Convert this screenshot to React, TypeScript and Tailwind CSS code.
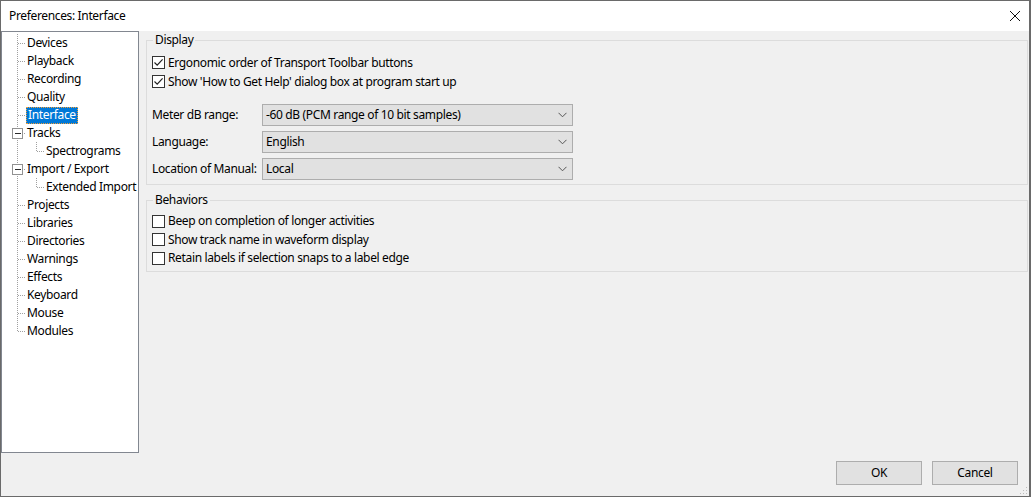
import React from "react";

type Node = { label: string; depth: 0 | 1; toggle?: boolean; selected?: boolean };

const tree: Node[] = [
  { label: "Devices", depth: 0 },
  { label: "Playback", depth: 0 },
  { label: "Recording", depth: 0 },
  { label: "Quality", depth: 0 },
  { label: "Interface", depth: 0, selected: true },
  { label: "Tracks", depth: 0, toggle: true },
  { label: "Spectrograms", depth: 1 },
  { label: "Import / Export", depth: 0, toggle: true },
  { label: "Extended Import", depth: 1 },
  { label: "Projects", depth: 0 },
  { label: "Libraries", depth: 0 },
  { label: "Directories", depth: 0 },
  { label: "Warnings", depth: 0 },
  { label: "Effects", depth: 0 },
  { label: "Keyboard", depth: 0 },
  { label: "Mouse", depth: 0 },
  { label: "Modules", depth: 0 },
];

const dot = "#a0a0a0";

function TreeRow({ node, last }: { node: Node; last: boolean }) {
  const w = node.depth === 0 ? 24 : 43;
  return (
    <div className="flex h-[18px] items-center whitespace-nowrap">
      <svg width={w} height={18} className="shrink-0" shapeRendering="crispEdges">
        {/* main trunk */}
        <line x1={15.5} y1={0} x2={15.5} y2={last ? 9 : 18} stroke={dot} strokeDasharray="1 1" />
        {node.depth === 0 ? (
          <line x1={16} y1={9.5} x2={24} y2={9.5} stroke={dot} strokeDasharray="1 1" />
        ) : (
          <>
            <line x1={34.5} y1={0} x2={34.5} y2={9} stroke={dot} strokeDasharray="1 1" />
            <line x1={35} y1={9.5} x2={43} y2={9.5} stroke={dot} strokeDasharray="1 1" />
          </>
        )}
        {node.toggle ? (
          <>
            <rect x={10.5} y={4.5} width={10} height={10} fill="#fff" stroke="#919191" />
            <line x1={13} y1={9.5} x2={19} y2={9.5} stroke="#2b2b2b" />
          </>
        ) : null}
      </svg>
      <span
        className={
          node.selected
            ? "flex h-[17px] items-center border border-dotted border-[#f2a03a] bg-[#0078d7] px-[1px] text-white"
            : "ml-[1px] text-black"
        }
      >
        {node.label}
      </span>
    </div>
  );
}

function CheckBox({ checked }: { checked?: boolean }) {
  return (
    <span className="flex h-[13px] w-[13px] shrink-0 items-center justify-center border border-[#333333] bg-white">
      {checked ? (
        <svg width="11" height="11" viewBox="0 0 11 11">
          <path d="M1.5 5.5 L4.2 8.2 L9.6 2.4" fill="none" stroke="#222" strokeWidth="1.2" />
        </svg>
      ) : null}
    </span>
  );
}

function CheckRow({ label, checked, tight }: { label: string; checked?: boolean; tight?: boolean }) {
  return (
    <div className={(tight ? "h-[18.5px]" : "h-[19px]") + " flex items-center gap-[3px] whitespace-nowrap"}>
      <CheckBox checked={checked} />
      <span>{label}</span>
    </div>
  );
}

function Combo({ label, value }: { label: string; value: string }) {
  return (
    <div className="flex items-center whitespace-nowrap">
      <span className="w-[110px] shrink-0">{label}</span>
      <div className="flex h-[22px] w-[311px] items-center justify-between border border-[#adadad] bg-[#e1e1e1] pl-[3px] pr-[5px]">
        <span>{value}</span>
        <svg width="9" height="6" viewBox="0 0 9 6">
          <path d="M0.5 0.8 L4.5 4.8 L8.5 0.8" fill="none" stroke="#555" strokeWidth="1" />
        </svg>
      </div>
    </div>
  );
}

function Group({ title, children, className }: { title: string; children: React.ReactNode; className?: string }) {
  return (
    <fieldset className={"border border-[#dcdcdc] pl-[5px] " + (className ?? "")}>
      <legend className="ml-[1px] px-[2px] leading-[16px]">{title}</legend>
      {children}
    </fieldset>
  );
}

export default function App() {
  return (
    <div
      className="flex h-[497px] w-[1031px] flex-col border border-r-2 border-[#6a6a6a] bg-[#f0f0f0] text-[12px] tracking-[-0.35px] text-black"
      style={{ fontFamily: '"Noto Sans", "Open Sans", sans-serif' }}
    >
      <div className="flex h-[30px] shrink-0 items-center justify-between bg-white pl-[8px] pr-[8px]">
        <span>Preferences: Interface</span>
        <svg width="12" height="12" viewBox="0 0 12 12">
          <path d="M1 1 L11 11 M11 1 L1 11" stroke="#111" strokeWidth="1" />
        </svg>
      </div>

      <div className="flex h-[422px] shrink-0">
        <div className="w-[138px] shrink-0 border border-[#828790] bg-white pt-[2px]">
          {tree.map((n, i) => (
            <TreeRow key={n.label} node={n} last={i === tree.length - 1} />
          ))}
        </div>

        <div className="flex flex-1 flex-col gap-[7px] pl-[7px] pr-[1px] pt-px">
          <Group title="Display" className="pb-[4px]">
            <div className="mt-[5px] flex flex-col">
              <CheckRow checked label="Ergonomic order of Transport Toolbar buttons" />
              <CheckRow checked label="Show 'How to Get Help' dialog box at program start up" />
            </div>
            <div className="mt-[13px] flex flex-col gap-[5px]">
              <Combo label="Meter dB range:" value="-60 dB (PCM range of 10 bit samples)" />
              <Combo label="Language:" value="English" />
              <Combo label="Location of Manual:" value="Local" />
            </div>
          </Group>

          <Group title="Behaviors" className="pb-[3px]">
            <div className="mt-[4px] flex flex-col">
              <CheckRow tight label="Beep on completion of longer activities" />
              <CheckRow tight label="Show track name in waveform display" />
              <CheckRow tight label="Retain labels if selection snaps to a label edge" />
            </div>
          </Group>
        </div>
      </div>

      <div className="relative flex flex-1 items-start justify-end gap-[10px] pr-[11px] pt-[8px]">
        <button className="h-[24px] w-[86px] border border-[#adadad] bg-[#e1e1e1]">OK</button>
        <button className="h-[24px] w-[86px] border border-[#adadad] bg-[#e1e1e1]">Cancel</button>
        <svg width="10" height="10" viewBox="0 0 10 10" className="absolute bottom-[1px] right-[1px]" shapeRendering="crispEdges">
          <rect x="8" y="2" width="1" height="1" fill="#bcbcbc" />
          <rect x="5" y="5" width="1" height="1" fill="#bcbcbc" />
          <rect x="8" y="5" width="1" height="1" fill="#bcbcbc" />
          <rect x="2" y="8" width="1" height="1" fill="#bcbcbc" />
          <rect x="5" y="8" width="1" height="1" fill="#bcbcbc" />
          <rect x="8" y="8" width="1" height="1" fill="#bcbcbc" />
        </svg>
      </div>
    </div>
  );
}
